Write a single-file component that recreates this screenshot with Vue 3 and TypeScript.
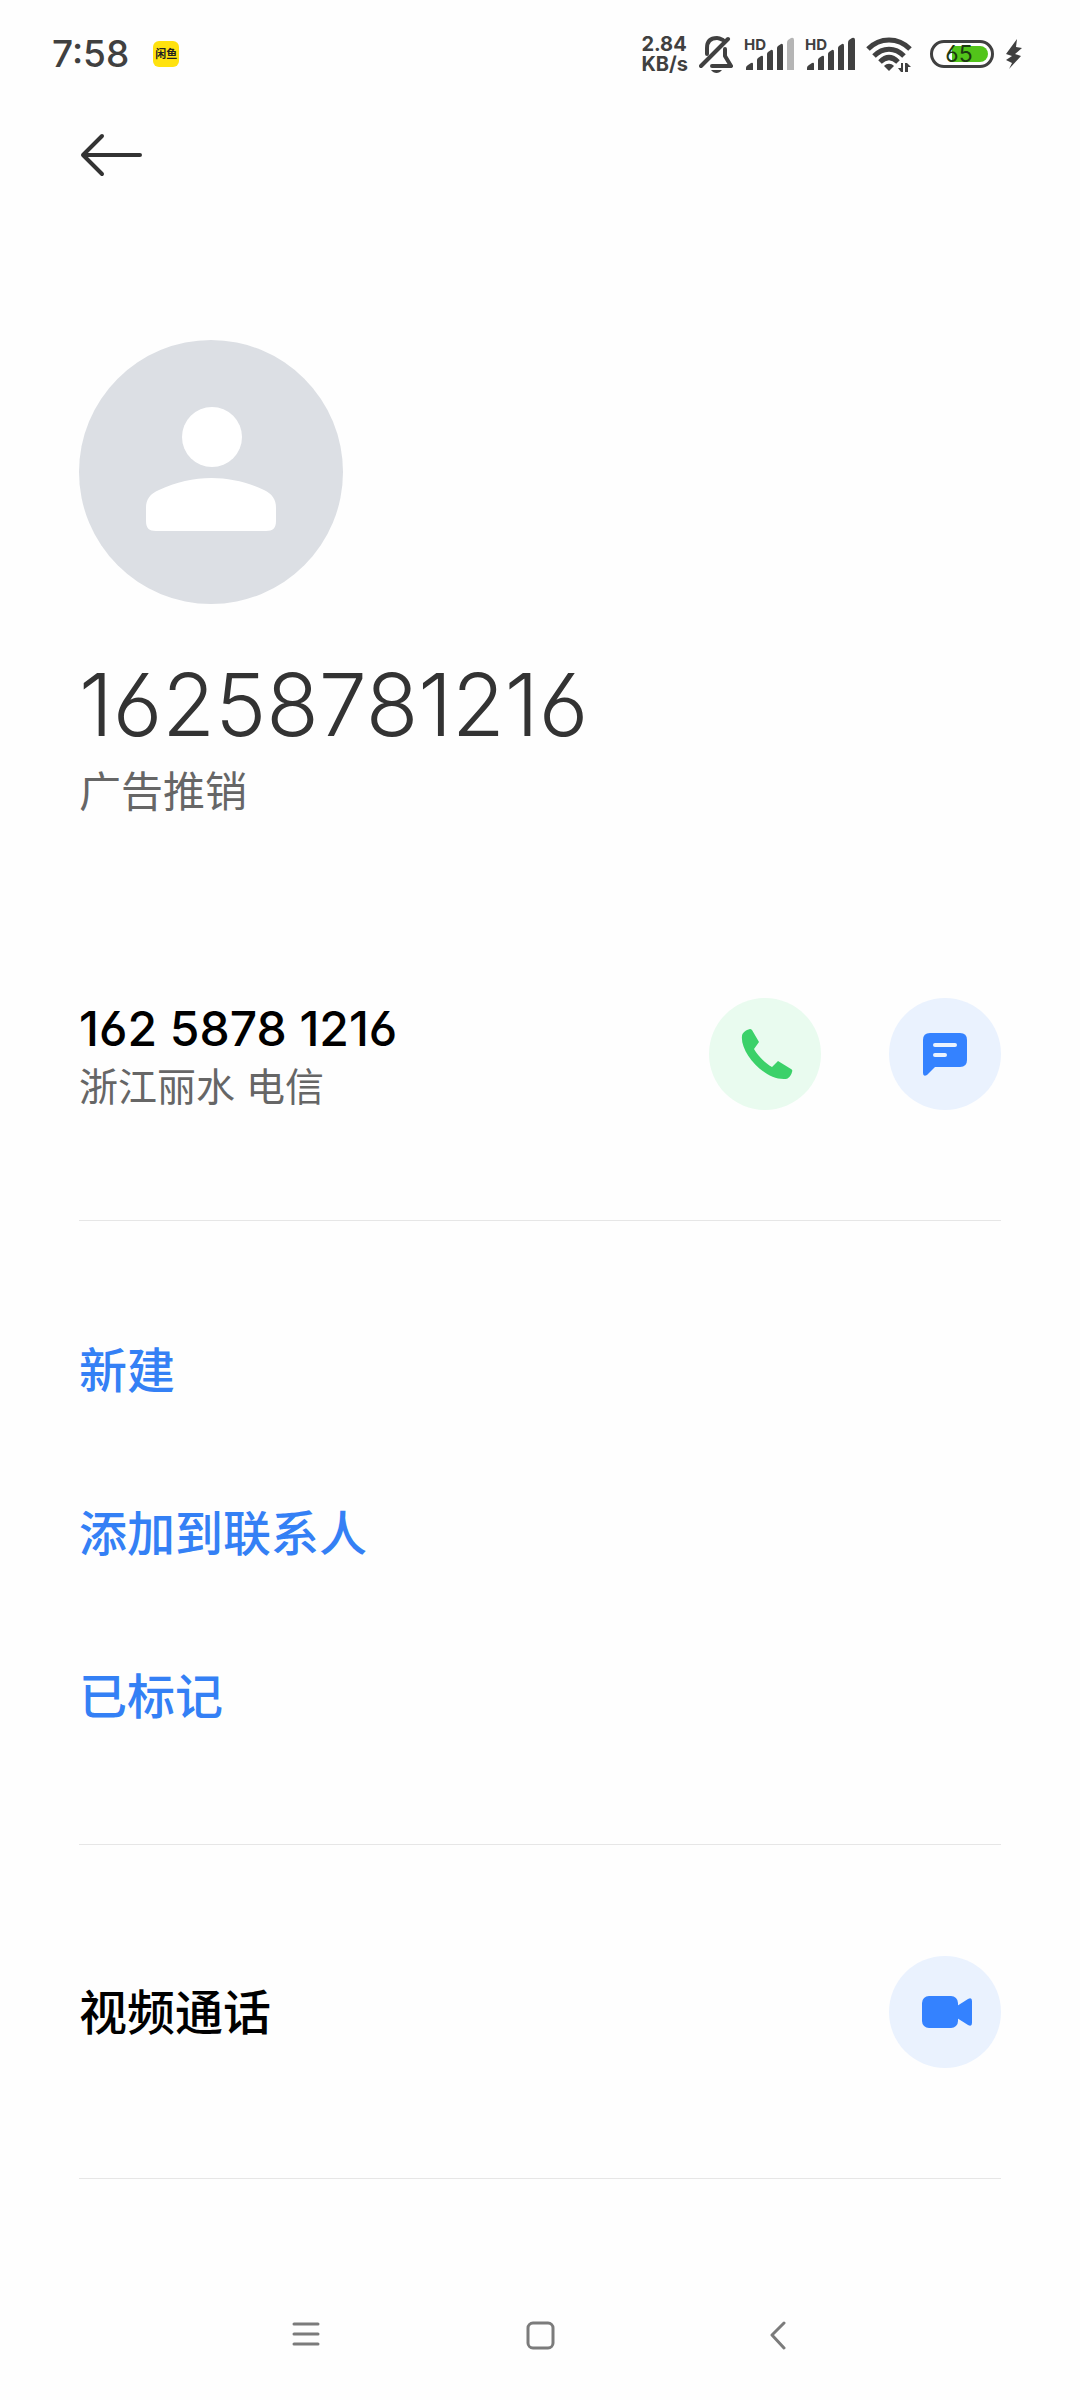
<script setup lang="ts">
interface Action {
  id: string
  label: string
}

const phone = '162 5878 1216'
const title = phone.replace(/ /g, '')

const actions: Action[] = [
  { id: 'create', label: '新建' },
  { id: 'add', label: '添加到联系人' },
  { id: 'marked', label: '已标记' },
]

// Fill colour of the tallest bar for each SIM card
const signals: string[] = ['#b5b5b5', '#404040']
</script>

<template>
  <div class="screen">
    <div class="status">
      <div class="status-left">
        <time class="clock">7:58</time>
        <span class="app-badge">闲鱼</span>
      </div>
      <div class="status-right">
        <div class="speed"><span>2.84</span><span>KB/s</span></div>
        <svg width="34" height="38" viewBox="0 0 34 38" fill="none" stroke="#404040" stroke-width="4" stroke-linecap="round" stroke-linejoin="round" aria-hidden="true">
          <path d="M8 19V13C8 6 12 3 18 3C20 3 22 4 24 5" />
          <path d="M2 31L29 4" />
          <path d="M26 14V21L32 31H13" />
          <path d="M12 35H23C20 39 15 39 12 35Z" fill="#404040" stroke="none" />
        </svg>
        <div v-for="(fill, i) in signals" :key="i" class="signal">
          <span class="hd">HD</span>
          <svg width="50" height="34" viewBox="0 0 50 34" fill="#404040" aria-hidden="true">
            <path d="M2 31Q2 29 4 28L7 26Q9 25 9 27V33H2Z M13 23Q13 22 14 21L17 19Q19 18 19 20V33H13Z M23 17Q23 16 24 15L27 13Q29 12 29 15V33H23Z M33 11Q33 10 34 9L37 7Q39 6 39 9V33H33Z" />
            <path d="M43 6Q43 4 44 3L47 1Q50 0 50 3V33H43Z" :fill="fill" />
          </svg>
        </div>
        <svg width="46" height="38" viewBox="0 0 46 38" fill="none" stroke="#404040" stroke-width="5" aria-hidden="true">
          <path d="M2 14C14 2 32 2 44 14" />
          <path d="M8 21C17 12 29 12 38 21" />
          <path d="M14 27C20 21 26 21 32 27" />
          <path d="M18 31C21 28 25 28 28 31L23 36Z" fill="#404040" stroke="none" />
          <path d="M37 28V37H35L32 33H35V28Z M39 37V28H41L45 32H42V37Z" fill="#404040" stroke="none" />
        </svg>
        <div class="battery"><span>65</span></div>
        <svg width="18" height="32" viewBox="0 0 18 32" fill="#404040" aria-hidden="true">
          <path d="M12 1L1 16L7 18L1 22L7 25L4 31L16 18L10 16L17 10L11 9Z" />
        </svg>
      </div>
    </div>

    <header class="topbar">
      <button class="back" type="button" aria-label="返回">
        <svg width="64" height="44" viewBox="0 0 64 44" fill="none" stroke="#333" stroke-width="4" stroke-linecap="round" stroke-linejoin="round">
          <path d="M61 22H4M23 3L4 22L23 41" />
        </svg>
      </button>
    </header>

    <main class="content">
      <section class="profile">
        <svg class="avatar" viewBox="0 0 264 264" aria-hidden="true">
          <circle cx="132" cy="132" r="132" fill="#dcdfe4" />
          <circle cx="133" cy="97" r="30" fill="#fff" />
          <path d="M67 168C67 159 71 154 80 150C114 134 151 134 185 150C193 154 197 159 197 168V181C197 188 194 191 187 191H77C70 191 67 188 67 181Z" fill="#fff" />
        </svg>
        <h1 class="title">{{ title }}</h1>
        <p class="tag">广告推销</p>
      </section>

      <section class="row number-row">
        <div class="row-text">
          <div class="phone">{{ phone }}</div>
          <div class="place">浙江丽水 电信</div>
        </div>
        <div class="buttons">
          <button class="round call" type="button" aria-label="拨打电话">
            <svg width="56" height="52" viewBox="-2 0 56 52" fill="#3bd169">
              <path d="M3 8C3 5 7 2 11 1Q12 1 13 2L20 14L15 21C19 28 26 35 33 39L39 33L52 41Q54 42 53 44C52 48 49 51 47 51C25 53 1 24 3 8Z" />
            </svg>
          </button>
          <button class="round message" type="button" aria-label="发送短信">
            <svg width="46" height="46" viewBox="0 0 46 46">
              <path d="M8 2H38Q45 2 45 9V29Q45 36 38 36H13L5 44Q1 46 1 42V9Q1 2 8 2Z" fill="#3482ff" />
              <path d="M13 14H33M13 24H23" stroke="#eaf2fe" stroke-width="4" stroke-linecap="round" />
            </svg>
          </button>
        </div>
      </section>

      <section class="actions">
        <button v-for="a in actions" :key="a.id" class="action" type="button">{{ a.label }}</button>
      </section>

      <section class="row">
        <div class="video-label">视频通话</div>
        <button class="round message" type="button" aria-label="视频通话">
          <svg width="56" height="34" viewBox="0 0 56 34" fill="#3482ff">
            <rect x="5" y="1" width="36" height="32" rx="7" />
            <path d="M40 11L51 4Q55 2 55 6V28Q55 32 51 30L40 23Z" />
          </svg>
        </button>
      </section>
    </main>

    <nav class="navbar">
      <button type="button" aria-label="最近任务">
        <svg width="32" height="32" viewBox="0 0 32 32" fill="none" stroke="#7b7b7b" stroke-width="3" stroke-linecap="round"><path d="M6 6H30M6 16H30M6 26H30" /></svg>
      </button>
      <button type="button" aria-label="主屏幕">
        <svg width="32" height="32" viewBox="0 0 32 32" fill="none" stroke="#7b7b7b" stroke-width="3"><rect x="4" y="5" width="25" height="25" rx="5" /></svg>
      </button>
      <button type="button" aria-label="返回上一级">
        <svg width="32" height="32" viewBox="0 0 32 32" fill="none" stroke="#7b7b7b" stroke-width="3" stroke-linecap="round" stroke-linejoin="round"><path d="M24 5L12 17L24 30" /></svg>
      </button>
    </nav>
  </div>
</template>

<style>
body {
  margin: 0;
  background: #fefefe;
}
</style>

<style scoped>
.screen {
  display: flex;
  flex-direction: column;
  min-height: 100vh;
  font-family: Inter, "Noto Sans CJK SC", sans-serif;
  font-feature-settings: "cv03";
  color: #000;
  background: #fefefe;
}
button {
  display: flex;
  align-items: center;
  justify-content: center;
  margin: 0;
  padding: 0;
  border: 0;
  background: none;
  font-family: inherit;
}
.status {
  display: flex;
  align-items: center;
  justify-content: space-between;
  height: 108px;
  padding: 0 57px 0 52px;
  color: #404040;
}
.status-left {
  display: flex;
  align-items: center;
  gap: 24px;
}
.clock {
  font-size: 37px;
  font-weight: 500;
  line-height: 48px;
}
.app-badge {
  width: 26px;
  height: 26px;
  border-radius: 6px;
  background: #ffe20f;
  color: #222;
  font-size: 11px;
  font-weight: 700;
  line-height: 26px;
  text-align: center;
}
.status-right {
  display: flex;
  align-items: center;
  gap: 11px;
}
.speed {
  display: flex;
  flex-direction: column;
  font-size: 20px;
  font-weight: 700;
  line-height: 20px;
}
.signal {
  position: relative;
  height: 34px;
}
.hd {
  position: absolute;
  top: 0;
  left: 0;
  font-size: 15px;
  font-weight: 700;
  line-height: 16px;
}
.battery {
  box-sizing: border-box;
  width: 64px;
  height: 28px;
  margin-left: 7px;
  padding: 3px;
  border: 3px solid #404040;
  border-radius: 14px;
}
.battery span {
  display: block;
  height: 16px;
  padding-right: 6px;
  border-radius: 8px;
  background: linear-gradient(90deg, #fefefe 16px, #52c41a 16px);
  color: #1c3a10;
  font-size: 23px;
  line-height: 16px;
  text-align: center;
}
.topbar {
  display: flex;
  align-items: center;
  height: 94px;
  padding: 0 79px;
}
.content {
  flex: 1;
  padding: 138px 79px 0;
}
.avatar {
  display: block;
  width: 264px;
  height: 264px;
}
.title {
  margin: 45px 0 0;
  color: #333;
  font-size: 86px;
  font-weight: 300;
  line-height: 112px;
}
.tag {
  margin: 3px 0 0;
  color: #666;
  font-size: 42px;
  line-height: 56px;
}
.row {
  display: flex;
  align-items: center;
  justify-content: space-between;
  height: 333px;
  border-bottom: 1px solid #e6e6e6;
}
.number-row {
  padding-top: 67px;
}
.row-text {
  padding-top: 6px;
}
.phone {
  font-size: 48px;
  font-weight: 500;
  line-height: 60px;
}
.place {
  color: #666;
  font-size: 39px;
  line-height: 56px;
}
.buttons {
  display: flex;
  gap: 68px;
}
.round {
  width: 112px;
  height: 112px;
  border-radius: 50%;
}
.call {
  background: #e9fbef;
}
.message {
  background: #eaf2fe;
}
.actions {
  display: flex;
  flex-direction: column;
  padding: 64px 0 70px;
  border-bottom: 1px solid #e6e6e6;
}
.action {
  height: 163px;
  justify-content: flex-start;
  color: #3480f5;
  font-size: 48px;
  font-weight: 500;
}
.video-label {
  padding-bottom: 6px;
  font-size: 48px;
  font-weight: 500;
}
.navbar {
  display: flex;
  align-items: center;
  justify-content: center;
  gap: 204px;
  height: 132px;
}
</style>
